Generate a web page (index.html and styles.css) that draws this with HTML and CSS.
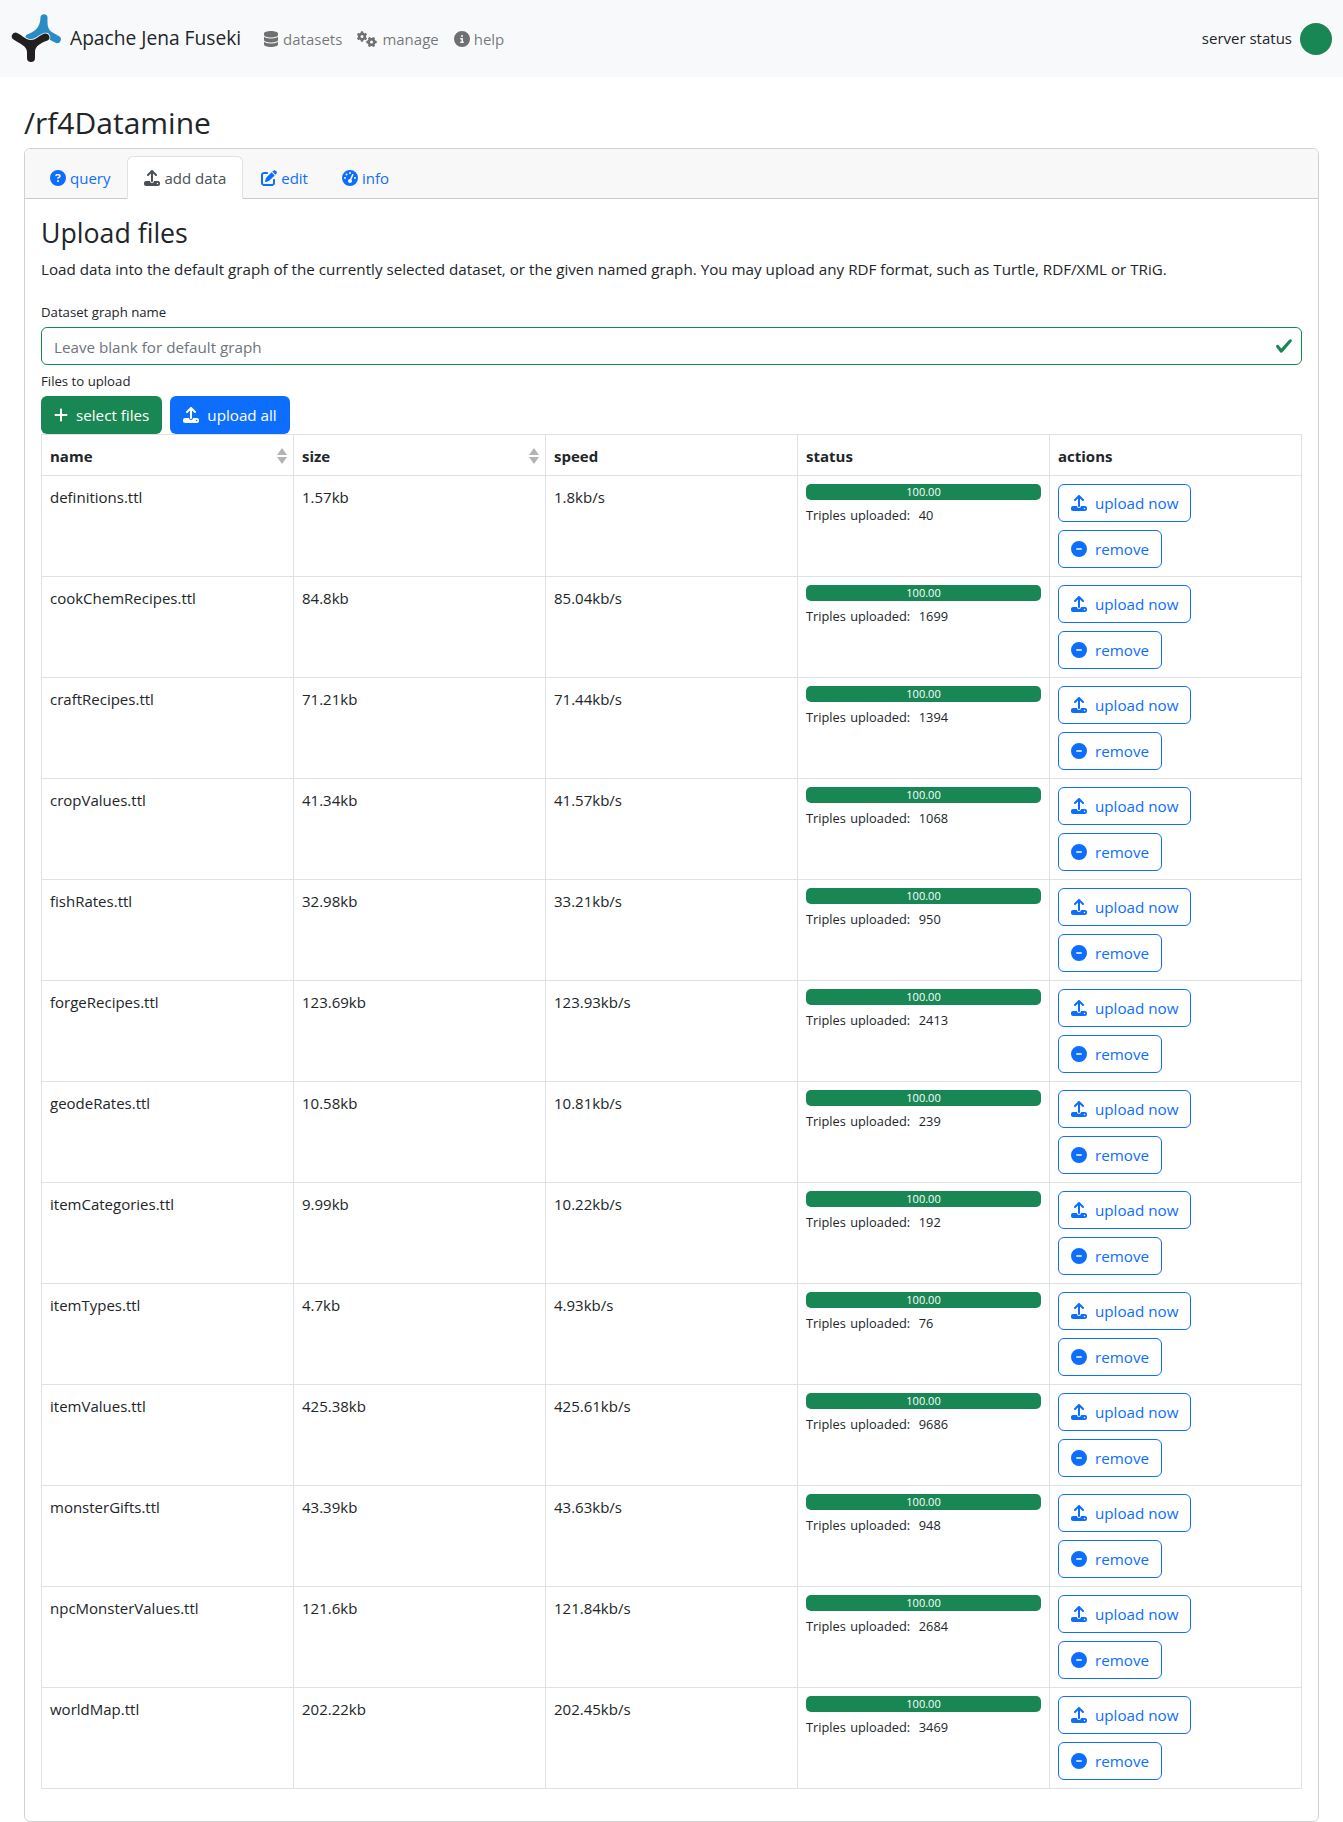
FILE: index.html
```html
<!doctype html>
<html lang="en">
<head>
  <meta charset="utf-8">
  <title>Apache Jena Fuseki - upload files</title>
  <link rel="stylesheet" href="styles.css">
</head>
<body>
<svg class="sprites" aria-hidden="true">
  <symbol id="i-upload" viewBox="0 0 512 512"><path d="M288 109.3V352c0 17.7-14.3 32-32 32s-32-14.3-32-32V109.3l-73.4 73.4c-12.5 12.5-32.8 12.5-45.3 0s-12.5-32.8 0-45.3l128-128c12.5-12.5 32.8-12.5 45.3 0l128 128c12.5 12.5 12.5 32.8 0 45.3s-32.8 12.5-45.3 0L288 109.3zM64 352H192c0 35.3 28.7 64 64 64s64-28.7 64-64H448c35.3 0 64 28.7 64 64v32c0 35.3-28.7 64-64 64H64c-35.3 0-64-28.7-64-64V416c0-35.3 28.7-64 64-64zM432 456a24 24 0 1 0 0-48 24 24 0 1 0 0 48z"/></symbol>
  <symbol id="i-minus" viewBox="0 0 512 512"><path d="M256 512A256 256 0 1 0 256 0a256 256 0 1 0 0 512zM184 232H328c13.3 0 24 10.7 24 24s-10.7 24-24 24H184c-13.3 0-24-10.7-24-24s10.7-24 24-24z"/></symbol>
  <symbol id="i-plus" viewBox="0 0 448 512"><path d="M256 80c0-17.7-14.3-32-32-32s-32 14.3-32 32V224H48c-17.7 0-32 14.3-32 32s14.3 32 32 32H192V432c0 17.7 14.3 32 32 32s32-14.3 32-32V288H400c17.7 0 32-14.3 32-32s-14.3-32-32-32H256V80z"/></symbol>
  <symbol id="i-database" viewBox="0 0 448 512"><path d="M448 80v48c0 44.2-100.3 80-224 80S0 172.2 0 128V80C0 35.8 100.3 0 224 0S448 35.8 448 80zM393.2 214.7c20.8-7.4 39.9-16.9 54.8-28.6V288c0 44.2-100.3 80-224 80S0 332.2 0 288V186.1c14.9 11.8 34 21.2 54.8 28.6C99.7 230.7 159.5 240 224 240s124.3-9.3 169.2-25.3zM0 346.1c14.9 11.8 34 21.2 54.8 28.6C99.7 390.7 159.5 400 224 400s124.3-9.3 169.2-25.3c20.8-7.4 39.9-16.9 54.8-28.6V432c0 44.2-100.3 80-224 80S0 476.2 0 432V346.1z"/></symbol>
  <symbol id="i-gears" viewBox="0 0 640 512"><path d="M308.5 135.3c7.1-6.3 9.9-16.2 6.2-25c-2.3-5.3-4.8-10.5-7.6-15.5L304 89.4c-3-5-6.3-9.9-9.8-14.6c-5.7-7.6-15.7-10.1-24.7-7.1l-28.2 9.3c-10.7-8.8-23-16-36.2-20.9L199 27.1c-1.9-9.3-9.1-16.7-18.5-17.8C173.9 8.4 167.2 8 160.4 8h-.7c-6.8 0-13.5 .4-20.1 1.2c-9.4 1.1-16.6 8.6-18.5 17.8L115 56.1c-13.3 5-25.5 12.1-36.2 20.9L50.5 67.8c-9-3-19-.5-24.7 7.1c-3.5 4.7-6.8 9.6-9.9 14.6l-3 5.3c-2.8 5-5.3 10.2-7.6 15.6c-3.7 8.7-.9 18.6 6.2 25l22.2 19.8C32.6 161.9 32 168.9 32 176s.6 14.1 1.7 20.9L11.5 216.7c-7.1 6.3-9.9 16.2-6.2 25c2.3 5.3 4.8 10.5 7.6 15.6l3 5.2c3 5.1 6.3 9.9 9.9 14.6c5.7 7.6 15.7 10.1 24.7 7.1l28.2-9.3c10.7 8.8 23 16 36.2 20.9l6.1 29.1c1.9 9.3 9.1 16.7 18.5 17.8c6.7 .8 13.5 1.2 20.4 1.2s13.7-.4 20.4-1.2c9.4-1.1 16.6-8.6 18.5-17.8l6.1-29.1c13.3-5 25.5-12.1 36.2-20.9l28.2 9.3c9 3 19 .5 24.7-7.1c3.5-4.7 6.8-9.5 9.8-14.6l3.1-5.4c2.8-5 5.3-10.2 7.6-15.5c3.7-8.7 .9-18.6-6.2-25l-22.2-19.8c1.1-6.8 1.7-13.8 1.7-20.9s-.6-14.1-1.7-20.9l22.2-19.8zM112 176a48 48 0 1 1 96 0 48 48 0 1 1 -96 0zM504.7 500.5c6.3 7.1 16.2 9.9 25 6.2c5.3-2.3 10.5-4.8 15.5-7.6l5.4-3.1c5-3 9.9-6.3 14.6-9.8c7.6-5.7 10.1-15.7 7.1-24.7l-9.3-28.2c8.8-10.7 16-23 20.9-36.2l29.1-6.1c9.3-1.9 16.7-9.1 17.8-18.5c.8-6.7 1.2-13.5 1.2-20.4s-.4-13.7-1.2-20.4c-1.1-9.4-8.6-16.6-17.8-18.5L583.9 307c-5-13.3-12.1-25.5-20.9-36.2l9.3-28.2c3-9 .5-19-7.1-24.7c-4.7-3.5-9.6-6.8-14.6-9.9l-5.3-3c-5-2.8-10.2-5.3-15.6-7.6c-8.7-3.7-18.6-.9-25 6.2l-19.8 22.2c-6.8-1.1-13.8-1.7-20.9-1.7s-14.1 .6-20.9 1.7l-19.8-22.2c-6.3-7.1-16.2-9.9-25-6.2c-5.3 2.3-10.5 4.8-15.6 7.6l-5.2 3c-5.1 3-9.9 6.3-14.6 9.9c-7.6 5.7-10.1 15.7-7.1 24.7l9.3 28.2c-8.8 10.7-16 23-20.9 36.2L315.1 313c-9.3 1.9-16.7 9.1-17.8 18.5c-.8 6.7-1.2 13.5-1.2 20.4s.4 13.7 1.2 20.4c1.1 9.4 8.6 16.6 17.8 18.5l29.1 6.1c5 13.3 12.1 25.5 20.9 36.2l-9.3 28.2c-3 9-.5 19 7.1 24.7c4.7 3.5 9.5 6.8 14.6 9.8l5.4 3.1c5 2.8 10.2 5.3 15.5 7.6c8.7 3.7 18.6 .9 25-6.2l19.8-22.2c6.8 1.1 13.8 1.7 21 1.7s14.1-.6 21-1.7l19.8 22.2zM464 304a48 48 0 1 1 0 96 48 48 0 1 1 0-96z"/></symbol>
  <symbol id="i-info" viewBox="0 0 512 512"><path d="M256 512A256 256 0 1 0 256 0a256 256 0 1 0 0 512zM216 336h24V272H216c-13.3 0-24-10.7-24-24s10.7-24 24-24h48c13.3 0 24 10.7 24 24v88h8c13.3 0 24 10.7 24 24s-10.7 24-24 24H216c-13.3 0-24-10.7-24-24s10.7-24 24-24zm40-208a32 32 0 1 1 0 64 32 32 0 1 1 0-64z"/></symbol>
  <symbol id="i-question" viewBox="0 0 512 512"><path d="M256 512A256 256 0 1 0 256 0a256 256 0 1 0 0 512zM169.8 165.3c7.9-22.3 29.1-37.3 52.8-37.3h58.3c34.9 0 63.1 28.3 63.1 63.1c0 22.6-12.1 43.5-31.7 54.8L280 264.4c-.2 13-10.9 23.6-24 23.6c-13.3 0-24-10.7-24-24V250.5c0-8.6 4.6-16.5 12.1-20.8l44.3-25.4c4.7-2.7 7.6-7.7 7.6-13.1c0-8.4-6.8-15.1-15.1-15.1H222.6c-3.4 0-6.4 2.1-7.5 5.3l-.4 1.2c-4.4 12.5-18.2 19-30.6 14.6s-19-18.2-14.6-30.6l.4-1.2zM224 352a32 32 0 1 1 64 0 32 32 0 1 1 -64 0z"/></symbol>
  <symbol id="i-edit" viewBox="0 0 512 512"><path d="M471.6 21.7c-21.9-21.9-57.3-21.9-79.2 0L362.3 51.7l97.9 97.9 30.1-30.1c21.9-21.9 21.9-57.3 0-79.2L471.6 21.7zm-299.2 220c-6.1 6.1-10.8 13.6-13.5 21.9l-29.6 88.8c-2.9 8.6-.6 18.1 5.8 24.6s15.9 8.7 24.6 5.8l88.8-29.6c8.2-2.7 15.7-7.4 21.9-13.5L437.7 172.3 339.7 74.3 172.4 241.7zM96 64C43 64 0 107 0 160V416c0 53 43 96 96 96H352c53 0 96-43 96-96V320c0-17.7-14.3-32-32-32s-32 14.3-32 32v96c0 17.7-14.3 32-32 32H96c-17.7 0-32-14.3-32-32V160c0-17.7 14.3-32 32-32h96c17.7 0 32-14.3 32-32s-14.3-32-32-32H96z"/></symbol>
  <symbol id="i-gauge" viewBox="0 0 512 512"><path d="M0 256a256 256 0 1 1 512 0A256 256 0 1 1 0 256zM288 96a32 32 0 1 0 -64 0 32 32 0 1 0 64 0zM256 416c35.3 0 64-28.7 64-64c0-17.4-6.9-33.1-18.1-44.6L366 161.7c5.3-12.1-.2-26.3-12.3-31.6s-26.3 .2-31.6 12.3L257.9 288c-.6 0-1.3 0-1.9 0c-35.3 0-64 28.7-64 64s28.7 64 64 64zM176 144a32 32 0 1 0 -64 0 32 32 0 1 0 64 0zM96 288a32 32 0 1 0 0-64 32 32 0 1 0 0 64zm352-32a32 32 0 1 0 -64 0 32 32 0 1 0 64 0z"/></symbol>
</svg>

<nav class="navbar">
  <a class="brand" href="#">
    <svg class="logo" viewBox="10 12 52 52">
      <path class="logo-blue" d="M40.5 17a3.6 3.6 0 0 1 7 0C47.5 23 47 28 51 31.5C53.5 33.5 57 34.5 59.5 36.5a3.7 3.7 0 0 1-3.5 6.4C51 41 47 37 43 36.5C38.5 36 35 39.500 30 41a3.7 3.7 0 0 1-3-6.600C34 32 40.500 28 40.500 17Z"/>
      <path class="logo-black" d="M15.500 32.500C20 33 25 40 31 40C36 40 40 34.500 45 33.500a3.800 3.800 0 0 1 2 7.300C41 43 35 46 35 52V58a4 4 0 0 1-8 0V52C27 46 20 44 13.500 39.500a3.800 3.800 0 0 1 2-7Z"/>
    </svg>
    <span>Apache Jena Fuseki</span>
  </a>
  <ul class="nav-links">
    <li><a href="#"><svg class="ico"><use href="#i-database"/></svg>datasets</a></li>
    <li><a href="#"><svg class="ico ico-wide"><use href="#i-gears"/></svg>manage</a></li>
    <li><a href="#"><svg class="ico"><use href="#i-info"/></svg>help</a></li>
  </ul>
  <div class="server-status">
    <span class="status-label">server status</span>
    <span class="status-dot"></span>
  </div>
</nav>

<main class="container">
  <h2 class="dataset-title">/rf4Datamine</h2>
  <div class="card">
    <div class="card-header">
      <ul class="tabs">
        <li><a href="#"><svg class="ico"><use href="#i-question"/></svg>query</a></li>
        <li class="active"><a href="#"><svg class="ico"><use href="#i-upload"/></svg>add data</a></li>
        <li><a href="#"><svg class="ico"><use href="#i-edit"/></svg>edit</a></li>
        <li><a href="#"><svg class="ico"><use href="#i-gauge"/></svg>info</a></li>
      </ul>
    </div>
    <div class="card-body">
      <h3 class="section-title">Upload files</h3>
      <p class="intro">Load data into the default graph of the currently selected dataset, or the given named graph. You may upload any RDF format, such as Turtle, RDF/XML or TRiG.</p>

      <label class="field-label" for="graph">Dataset graph name</label>
      <div class="graph-input">
        <input id="graph" type="text" placeholder="Leave blank for default graph">
        <svg class="valid-check" viewBox="0 0 8 8"><path d="M2.3 6.73.6 4.53c-.4-1.04.46-1.4 1.1-.8l1.1 1.4 3.4-3.8c.6-.63 1.6-.27 1.2.7l-4 4.6c-.43.5-.8.4-1.1.1z"/></svg>
      </div>

      <label class="field-label files-label">Files to upload</label>
      <div class="file-buttons">
        <button class="btn btn-success"><svg class="btn-ico btn-ico-plus"><use href="#i-plus"/></svg>select files</button>
        <button class="btn btn-primary"><svg class="btn-ico"><use href="#i-upload"/></svg>upload all</button>
      </div>

      <table class="files">
        <thead>
          <tr>
            <th class="sortable">name</th>
            <th class="sortable">size</th>
            <th>speed</th>
            <th>status</th>
            <th>actions</th>
          </tr>
        </thead>
        <tbody>
          <tr>
            <td>definitions.ttl</td><td>1.57kb</td><td>1.8kb/s</td>
            <td class="cell-tight"><div class="progress">100.00</div><div class="triples">Triples uploaded:&nbsp; 40</div></td>
            <td class="cell-tight"><button class="btn btn-outline"><svg class="btn-ico"><use href="#i-upload"/></svg>upload now</button><button class="btn btn-outline"><svg class="btn-ico"><use href="#i-minus"/></svg>remove</button></td>
          </tr>
          <tr>
            <td>cookChemRecipes.ttl</td><td>84.8kb</td><td>85.04kb/s</td>
            <td class="cell-tight"><div class="progress">100.00</div><div class="triples">Triples uploaded:&nbsp; 1699</div></td>
            <td class="cell-tight"><button class="btn btn-outline"><svg class="btn-ico"><use href="#i-upload"/></svg>upload now</button><button class="btn btn-outline"><svg class="btn-ico"><use href="#i-minus"/></svg>remove</button></td>
          </tr>
          <tr>
            <td>craftRecipes.ttl</td><td>71.21kb</td><td>71.44kb/s</td>
            <td class="cell-tight"><div class="progress">100.00</div><div class="triples">Triples uploaded:&nbsp; 1394</div></td>
            <td class="cell-tight"><button class="btn btn-outline"><svg class="btn-ico"><use href="#i-upload"/></svg>upload now</button><button class="btn btn-outline"><svg class="btn-ico"><use href="#i-minus"/></svg>remove</button></td>
          </tr>
          <tr>
            <td>cropValues.ttl</td><td>41.34kb</td><td>41.57kb/s</td>
            <td class="cell-tight"><div class="progress">100.00</div><div class="triples">Triples uploaded:&nbsp; 1068</div></td>
            <td class="cell-tight"><button class="btn btn-outline"><svg class="btn-ico"><use href="#i-upload"/></svg>upload now</button><button class="btn btn-outline"><svg class="btn-ico"><use href="#i-minus"/></svg>remove</button></td>
          </tr>
          <tr>
            <td>fishRates.ttl</td><td>32.98kb</td><td>33.21kb/s</td>
            <td class="cell-tight"><div class="progress">100.00</div><div class="triples">Triples uploaded:&nbsp; 950</div></td>
            <td class="cell-tight"><button class="btn btn-outline"><svg class="btn-ico"><use href="#i-upload"/></svg>upload now</button><button class="btn btn-outline"><svg class="btn-ico"><use href="#i-minus"/></svg>remove</button></td>
          </tr>
          <tr>
            <td>forgeRecipes.ttl</td><td>123.69kb</td><td>123.93kb/s</td>
            <td class="cell-tight"><div class="progress">100.00</div><div class="triples">Triples uploaded:&nbsp; 2413</div></td>
            <td class="cell-tight"><button class="btn btn-outline"><svg class="btn-ico"><use href="#i-upload"/></svg>upload now</button><button class="btn btn-outline"><svg class="btn-ico"><use href="#i-minus"/></svg>remove</button></td>
          </tr>
          <tr>
            <td>geodeRates.ttl</td><td>10.58kb</td><td>10.81kb/s</td>
            <td class="cell-tight"><div class="progress">100.00</div><div class="triples">Triples uploaded:&nbsp; 239</div></td>
            <td class="cell-tight"><button class="btn btn-outline"><svg class="btn-ico"><use href="#i-upload"/></svg>upload now</button><button class="btn btn-outline"><svg class="btn-ico"><use href="#i-minus"/></svg>remove</button></td>
          </tr>
          <tr>
            <td>itemCategories.ttl</td><td>9.99kb</td><td>10.22kb/s</td>
            <td class="cell-tight"><div class="progress">100.00</div><div class="triples">Triples uploaded:&nbsp; 192</div></td>
            <td class="cell-tight"><button class="btn btn-outline"><svg class="btn-ico"><use href="#i-upload"/></svg>upload now</button><button class="btn btn-outline"><svg class="btn-ico"><use href="#i-minus"/></svg>remove</button></td>
          </tr>
          <tr>
            <td>itemTypes.ttl</td><td>4.7kb</td><td>4.93kb/s</td>
            <td class="cell-tight"><div class="progress">100.00</div><div class="triples">Triples uploaded:&nbsp; 76</div></td>
            <td class="cell-tight"><button class="btn btn-outline"><svg class="btn-ico"><use href="#i-upload"/></svg>upload now</button><button class="btn btn-outline"><svg class="btn-ico"><use href="#i-minus"/></svg>remove</button></td>
          </tr>
          <tr>
            <td>itemValues.ttl</td><td>425.38kb</td><td>425.61kb/s</td>
            <td class="cell-tight"><div class="progress">100.00</div><div class="triples">Triples uploaded:&nbsp; 9686</div></td>
            <td class="cell-tight"><button class="btn btn-outline"><svg class="btn-ico"><use href="#i-upload"/></svg>upload now</button><button class="btn btn-outline"><svg class="btn-ico"><use href="#i-minus"/></svg>remove</button></td>
          </tr>
          <tr>
            <td>monsterGifts.ttl</td><td>43.39kb</td><td>43.63kb/s</td>
            <td class="cell-tight"><div class="progress">100.00</div><div class="triples">Triples uploaded:&nbsp; 948</div></td>
            <td class="cell-tight"><button class="btn btn-outline"><svg class="btn-ico"><use href="#i-upload"/></svg>upload now</button><button class="btn btn-outline"><svg class="btn-ico"><use href="#i-minus"/></svg>remove</button></td>
          </tr>
          <tr>
            <td>npcMonsterValues.ttl</td><td>121.6kb</td><td>121.84kb/s</td>
            <td class="cell-tight"><div class="progress">100.00</div><div class="triples">Triples uploaded:&nbsp; 2684</div></td>
            <td class="cell-tight"><button class="btn btn-outline"><svg class="btn-ico"><use href="#i-upload"/></svg>upload now</button><button class="btn btn-outline"><svg class="btn-ico"><use href="#i-minus"/></svg>remove</button></td>
          </tr>
          <tr>
            <td>worldMap.ttl</td><td>202.22kb</td><td>202.45kb/s</td>
            <td class="cell-tight"><div class="progress">100.00</div><div class="triples">Triples uploaded:&nbsp; 3469</div></td>
            <td class="cell-tight"><button class="btn btn-outline"><svg class="btn-ico"><use href="#i-upload"/></svg>upload now</button><button class="btn btn-outline"><svg class="btn-ico"><use href="#i-minus"/></svg>remove</button></td>
          </tr>
        </tbody>
      </table>
    </div>
  </div>
</main>
</body>
</html>
```

FILE: styles.css
```css
:root{--txt:#212529;--muted:rgba(0,0,0,.55);--line:#dee2e6;--blue:#0d6efd;--green:#198754;--card-line:rgba(0,0,0,.18);}
*{box-sizing:border-box;margin:0;padding:0;}
body{font-family:"Open Sans","Noto Sans",sans-serif;font-size:15px;line-height:24px;color:var(--txt);background:#fff;}
a{text-decoration:none;}
ul{list-style:none;}
.sprites{display:none;}
.ico{width:16px;height:16px;fill:currentColor;margin-right:4px;vertical-align:-2px;}
.ico-wide{width:20px;margin-right:5px;}

/* navbar */
.navbar{height:77px;background:#f8f9fa;display:flex;align-items:center;padding:0 11px 0 10px;}
.brand{display:flex;align-items:center;color:var(--txt);font-size:19.2px;margin-right:22px;margin-top:-2px;}
.logo{width:52px;height:52px;margin-right:8px;}
.logo-blue{fill:#2a8cc4;}
.logo-black{fill:#231f20;stroke:#f8f9fa;stroke-width:1.5;paint-order:stroke;}
.nav-links{display:flex;gap:15px;}
.nav-links a{color:var(--muted);}
.server-status{margin-left:auto;display:flex;align-items:center;gap:8px;}
.status-label{padding-bottom:2px;}
.status-dot{width:32px;height:32px;border-radius:50%;background:var(--green);}

/* card + tabs */
.container{padding:0 24px;}
.dataset-title{font-size:30px;font-weight:400;line-height:38px;padding-top:27px;margin-bottom:6px;}
.card{border:1px solid var(--card-line);border-radius:6px;padding-bottom:32px;}
.card-header{background:#f8f8f8;border-bottom:1px solid var(--card-line);border-radius:5px 5px 0 0;height:50px;padding:7px 8px 0;}
.tabs{display:flex;margin-bottom:-1px;}
.tabs a{display:block;height:43px;padding:9px 16px;color:var(--blue);border:1px solid transparent;border-radius:6px 6px 0 0;}
.tabs .active{margin-right:1px;}
.tabs .active a{color:#495057;background:#fff;border-color:var(--line) var(--line) #fff;}

/* form */
.card-body{padding:17px 16px 0;}
.section-title{font-size:26.7px;font-weight:400;line-height:34px;margin-bottom:7px;}
.intro{font-size:15.2px;margin-bottom:21px;}
.field-label{display:block;font-size:13.2px;line-height:20px;margin-bottom:5px;}
.graph-input{position:relative;margin-bottom:6px;}
.graph-input input{width:100%;height:38px;padding:1px 40px 0 12px;border:1px solid var(--green);border-radius:6px;font:inherit;font-size:15.2px;color:var(--txt);outline:none;}
.graph-input input::placeholder{color:#6c757d;opacity:1;}
.valid-check{position:absolute;right:9px;top:10px;width:18px;height:18px;fill:var(--green);}
.files-label{margin-bottom:5px;}
.file-buttons{display:flex;gap:8px;}

/* buttons */
.btn{display:inline-flex;align-items:center;height:38px;padding:0 12px;border:1px solid transparent;border-radius:6px;font:inherit;font-size:15.2px;background:none;cursor:pointer;white-space:nowrap;}
.btn-ico{width:16px;height:16px;fill:currentColor;margin-right:8px;}
.btn-ico-plus{width:14px;}
.btn-success{background:var(--green);color:#fff;}
.btn-primary{background:var(--blue);color:#fff;}
.btn-outline{border-color:var(--blue);color:var(--blue);display:flex;}
.btn-outline+.btn-outline{margin-top:8px;}

/* table */
.files{width:100%;table-layout:fixed;border-collapse:collapse;border:1px solid var(--line);}
.files th,.files td{border:1px solid var(--line);padding:9px 8px 7px;text-align:left;vertical-align:top;}
.files th{height:41px;font-weight:700;}
.files td{height:101px;}
.files .cell-tight{padding:8px;}
.sortable{position:relative;}
.sortable::before,.sortable::after{content:"";position:absolute;right:6px;border-left:5px solid transparent;border-right:5px solid transparent;}
.sortable::before{top:13px;border-bottom:7px solid #b3b3b3;}
.sortable::after{top:22px;border-top:7px solid #b3b3b3;}
.progress{height:16px;border-radius:5px;background:var(--green);color:#fff;font-size:11px;line-height:16px;text-align:center;}
.triples{font-size:12.8px;line-height:20px;margin-top:5px;word-spacing:1px;}
```
